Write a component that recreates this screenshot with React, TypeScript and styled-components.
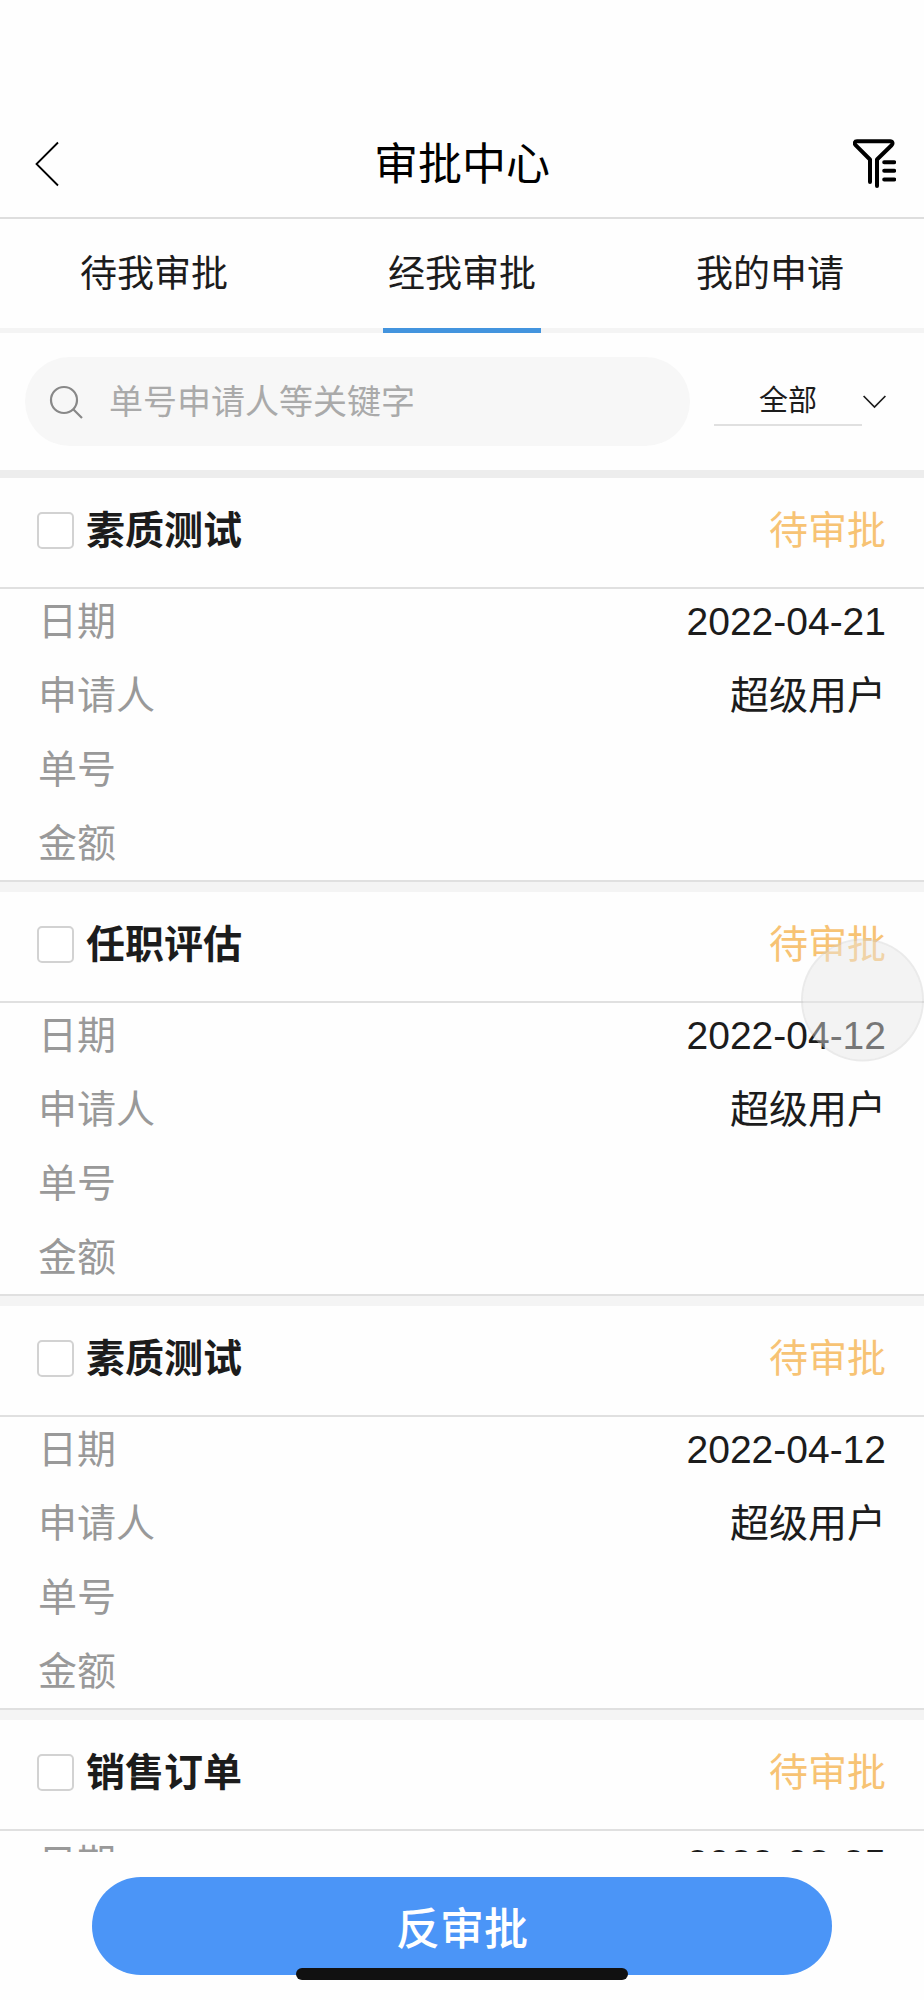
import React, { useState } from "react";
import styled, { createGlobalStyle } from "styled-components";

const GlobalStyle = createGlobalStyle`
  *, *::before, *::after { box-sizing: border-box; }
  body {
    margin: 0;
    background: #fefefe;
    color: #1c1c1c;
    font-family: "Liberation Sans", "Noto Sans CJK SC", sans-serif;
  }
  button, input, select { font-family: inherit; color: inherit; }
`;

const Screen = styled.div`
  display: flex;
  flex-direction: column;
  height: 100vh;
`;

const Header = styled.header`
  display: grid;
  grid-template-columns: 1fr auto 1fr;
  align-items: center;
  flex: none;
  padding: 110px 28px 0;
  border-bottom: 2px solid #dedede;
`;

const Title = styled.h1`
  margin: 0;
  padding-top: 2px;
  color: #000;
  font-size: 44px;
  font-weight: 400;
  line-height: 105px;
`;

const IconButton = styled.button<{ $end?: boolean }>`
  display: flex;
  justify-self: ${(p) => (p.$end ? "end" : "start")};
  padding: 0;
  border: 0;
  background: none;
  color: #000;
  cursor: pointer;
`;

const Tabs = styled.nav`
  display: grid;
  grid-template-columns: repeat(3, 1fr);
  flex: none;
  box-shadow: inset 0 -5px #f4f4f4;
`;

const Tab = styled.button<{ $active: boolean }>`
  justify-self: center;
  padding: 2px 5px 0;
  border: 0;
  border-bottom: 5px solid ${(p) => (p.$active ? "#4394de" : "transparent")};
  background: none;
  font-size: 37px;
  line-height: 107px;
  cursor: pointer;
`;

const SearchRow = styled.form`
  display: flex;
  align-items: center;
  flex: none;
  padding: 24px 38px 24px 25px;
`;

const SearchBox = styled.label`
  display: flex;
  align-items: center;
  flex: 1;
  gap: 26px;
  min-width: 0;
  height: 89px;
  margin-right: 24px;
  padding: 0 24px;
  border-radius: 45px;
  background: #f7f7f7;
  color: #888;
`;

const SearchInput = styled.input`
  flex: 1;
  min-width: 0;
  padding: 0;
  border: 0;
  outline: 0;
  background: none;
  color: #1c1c1c;
  font-size: 34px;
  line-height: 48px;
  &::placeholder { color: #aaa; opacity: 1; }
`;

const TypeFilter = styled.label`
  display: flex;
  align-items: center;
  gap: 1px;
`;

const TypeSelect = styled.select`
  appearance: none;
  width: 148px;
  height: 48px;
  padding: 0;
  border: 0;
  border-bottom: 2px solid #e0e0e0;
  border-radius: 0;
  outline: 0;
  background: none;
  font-size: 29px;
  text-align: center;
  text-align-last: center;
`;

const List = styled.main`
  flex: 1;
  min-height: 0;
  overflow-y: auto;
  scrollbar-width: none;
  border-top: 8px solid #ededed;
`;

const Card = styled.article`
  border-bottom: 10px solid #f4f4f4;
`;

const CardHeader = styled.header`
  display: flex;
  align-items: center;
  justify-content: space-between;
  height: 111px;
  padding: 0 38px 4px 37px;
  border-bottom: 2px solid #e0e0e0;
  font-size: 39px;
  line-height: 66px;
`;

const CardTitle = styled.label`
  display: flex;
  align-items: center;
  gap: 12px;
  font-weight: 700;
`;

const Checkbox = styled.input`
  appearance: none;
  width: 37px;
  height: 37px;
  margin: 0;
  border: 2px solid #d2d2d2;
  border-radius: 5px;
  background: #fff;
  &:checked { border-color: #4b95f7; background: #4b95f7; }
`;

const Status = styled.span`
  color: #f7c374;
`;

const Fields = styled.dl`
  display: flex;
  flex-direction: column;
  gap: 8px;
  margin: 0;
  padding: 0 38px 3px;
  border-bottom: 2px solid #e0e0e0;
`;

const Field = styled.div`
  display: flex;
  justify-content: space-between;
  height: 66px;
  font-size: 39px;
  line-height: 66px;
`;

const FieldName = styled.dt`
  color: #999;
`;

const FieldValue = styled.dd`
  margin: 0;
`;

const Footer = styled.footer`
  position: relative;
  flex: none;
  padding: 25px 10%;
`;

const SubmitButton = styled.button`
  display: block;
  width: 100%;
  height: 98px;
  padding: 0;
  border: 0;
  border-radius: 49px;
  background: #4b95f7;
  color: #fff;
  font-size: 44px;
  font-weight: 500;
  cursor: pointer;
`;

const HomeIndicator = styled.div`
  position: absolute;
  bottom: 20px;
  left: 32%;
  right: 32%;
  height: 12px;
  border-radius: 6px;
  background: #111;
`;

const FloatingButton = styled.button`
  position: fixed;
  top: 50%;
  right: 0;
  width: 123px;
  height: 123px;
  padding: 0;
  border: 2px solid rgba(205, 205, 205, 0.4);
  border-radius: 50%;
  background: rgba(231, 231, 231, 0.45);
  background-clip: padding-box;
  transform: translateY(-50%);
`;

const BackIcon = () => (
  <svg width="34" height="46" viewBox="-4 0 34 46" fill="none" stroke="currentColor" strokeWidth="1.8" aria-hidden="true">
    <path d="M26 1.5 4.5 23 26 44.5" />
  </svg>
);

const FilterIcon = () => (
  <svg width="43" height="50" viewBox="0 0 43 50" fill="none" stroke="currentColor" strokeWidth="4" strokeLinecap="round" strokeLinejoin="round" aria-hidden="true">
    <path d="M17 43V20.5L2.6 6.2C1 4.4 1.6 2.3 4 2.3H37.2C39.6 2.3 40.2 4.4 38.6 6.2L24 20.5V47" />
    <path d="M31.2 23.2H41.2M31.2 31.8H41.2M31.2 40.4H41.2" />
  </svg>
);

const SearchIcon = () => (
  <svg width="34" height="34" viewBox="0 0 34 34" fill="none" stroke="currentColor" strokeWidth="2.2" aria-hidden="true">
    <circle cx="15" cy="15" r="13" />
    <path d="M24 24 33 33" />
  </svg>
);

const ChevronIcon = () => (
  <svg width="23" height="14" viewBox="0 0 23 14" fill="none" stroke="currentColor" strokeWidth="1.7" aria-hidden="true">
    <path d="M.6 1 11.5 12 22.4 1" />
  </svg>
);

const tabs = ["待我审批", "经我审批", "我的申请"];

const records = [
  { title: "素质测试", date: "2022-04-21" },
  { title: "任职评估", date: "2022-04-12" },
  { title: "素质测试", date: "2022-04-12" },
  { title: "销售订单", date: "2022-03-25" },
];

export default function App() {
  const [active, setActive] = useState(1);

  return (
    <Screen>
      <GlobalStyle />
      <Header>
        <IconButton type="button" aria-label="返回">
          <BackIcon />
        </IconButton>
        <Title>审批中心</Title>
        <IconButton type="button" aria-label="筛选" $end>
          <FilterIcon />
        </IconButton>
      </Header>

      <Tabs>
        {tabs.map((name, i) => (
          <Tab key={name} type="button" $active={i === active} onClick={() => setActive(i)}>
            {name}
          </Tab>
        ))}
      </Tabs>

      <SearchRow onSubmit={(e) => e.preventDefault()}>
        <SearchBox>
          <SearchIcon />
          <SearchInput type="text" aria-label="搜索" placeholder="单号申请人等关键字" />
        </SearchBox>
        <TypeFilter>
          <TypeSelect aria-label="类型">
            <option>全部</option>
          </TypeSelect>
          <ChevronIcon />
        </TypeFilter>
      </SearchRow>

      <List>
        {records.map((record, i) => (
          <Card key={i}>
            <CardHeader>
              <CardTitle>
                <Checkbox type="checkbox" />
                {record.title}
              </CardTitle>
              <Status>待审批</Status>
            </CardHeader>
            <Fields>
              <Field>
                <FieldName>日期</FieldName>
                <FieldValue>{record.date}</FieldValue>
              </Field>
              <Field>
                <FieldName>申请人</FieldName>
                <FieldValue>超级用户</FieldValue>
              </Field>
              <Field>
                <FieldName>单号</FieldName>
                <FieldValue />
              </Field>
              <Field>
                <FieldName>金额</FieldName>
                <FieldValue />
              </Field>
            </Fields>
          </Card>
        ))}
      </List>

      <Footer>
        <SubmitButton type="button">反审批</SubmitButton>
        <HomeIndicator />
      </Footer>
      <FloatingButton type="button" aria-label="悬浮按钮" />
    </Screen>
  );
}
